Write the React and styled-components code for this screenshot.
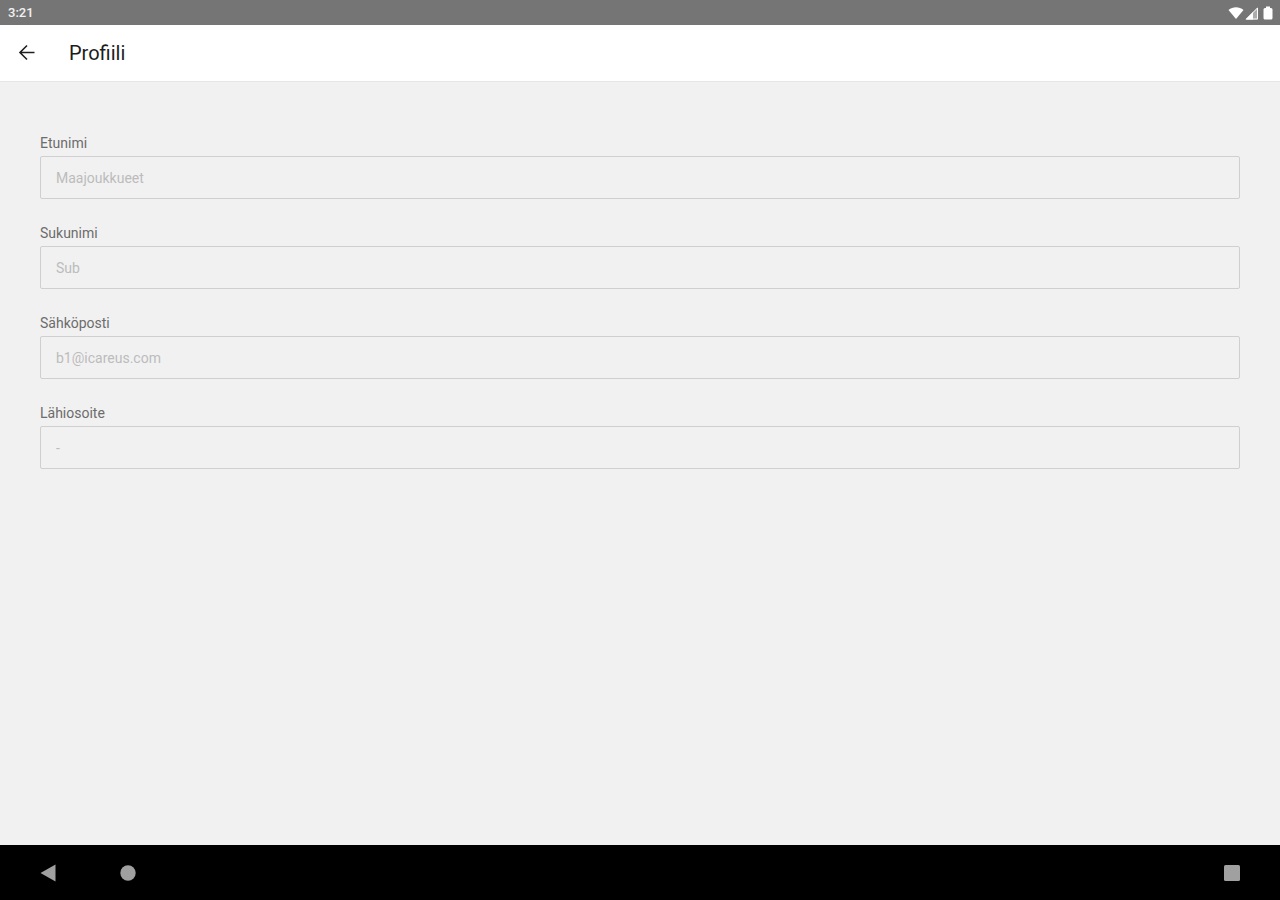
import React from "react";
import styled, { createGlobalStyle } from "styled-components";

const GlobalStyle = createGlobalStyle`
  *, *::before, *::after { box-sizing: border-box; }
  body {
    margin: 0;
    background: #f1f1f1;
    font-family: Roboto, "Liberation Sans", sans-serif;
  }
`;

const Screen = styled.div`
  display: flex;
  flex-direction: column;
  min-height: 100vh;
`;

const StatusBar = styled.div`
  display: flex;
  align-items: center;
  justify-content: space-between;
  height: 25px;
  padding: 0 6px 0 8px;
  background: #757575;
  color: #f1f1f1;
  font-size: 13px;
  font-weight: 500;
  line-height: 17px;
`;

const StatusIcons = styled.div`
  display: flex;
  align-items: center;
  gap: 1px;
`;

const Header = styled.header`
  display: flex;
  align-items: center;
  gap: 24px;
  height: 57px;
  padding: 0 9px;
  background: #fff;
  border-bottom: 1px solid #e6e6e6;
`;

const IconButton = styled.button`
  display: flex;
  align-items: center;
  justify-content: center;
  width: 36px;
  height: 36px;
  padding: 0;
  border: 0;
  background: none;
  color: ${({ $color }) => $color};
`;

const Title = styled.h1`
  margin: 0;
  color: #1c1c1c;
  font-size: 20px;
  font-weight: 400;
  line-height: 24px;
`;

const Form = styled.form`
  display: flex;
  flex: 1;
  flex-direction: column;
  gap: 26px;
  padding: 53px 40px;
`;

const Field = styled.div`
  display: flex;
  flex-direction: column;
  gap: 4px;
`;

const Label = styled.label`
  color: #6c6c6c;
  font-size: 14px;
  line-height: 17px;
`;

const Input = styled.input`
  width: 100%;
  height: 43px;
  padding: 0 15px;
  border: 1px solid #cfcfcf;
  border-radius: 2px;
  background: transparent;
  color: #bcbcbc;
  font-family: inherit;
  font-size: 14px;
  outline: none;
`;

const NavigationBar = styled.nav`
  display: flex;
  align-items: center;
  justify-content: space-between;
  height: 55px;
  padding: 0 30px;
  background: #000;
`;

const NavigationGroup = styled.div`
  display: flex;
  gap: 44px;
`;

const fields = [
  { id: "first-name", label: "Etunimi", value: "Maajoukkueet", type: "text" },
  { id: "last-name", label: "Sukunimi", value: "Sub", type: "text" },
  { id: "email", label: "Sähköposti", value: "b1@icareus.com", type: "email" },
  { id: "address", label: "Lähiosoite", value: "-", type: "text" },
];

export default function App() {
  return (
    <>
      <GlobalStyle />
      <Screen>
        <StatusBar>
          <span>3:21</span>
          <StatusIcons aria-hidden="true">
            <svg width="16" height="14" viewBox="0 0 16 14" fill="#fff">
              <path d="M0.5 4C4.8 0.2 11.2 0.2 15.5 4L8 13z" />
            </svg>
            <svg width="14" height="14" viewBox="0 0 14 14">
              <path d="M0.5 13.5L13 1v12.5z" fill="#fff" fillOpacity=".4" />
              <path d="M0.5 13.5L8 6v7.5z" fill="#fff" />
              <path d="M1.5 13L12.5 2v11z" fill="none" stroke="#fff" />
            </svg>
            <svg width="14" height="14" viewBox="0 0 14 14" fill="#fff">
              <path d="M6 0.5h4V2h1q1.5 0 1.5 1.5v8.5q0 1.5-1.5 1.500H5q-1.500 0-1.500-1.500v-8.500Q3.500 2 5 2h1z" />
            </svg>
          </StatusIcons>
        </StatusBar>
        <Header>
          <IconButton type="button" aria-label="Takaisin" $color="#202020">
            <svg width="18" height="18" viewBox="0 0 18 18" fill="none" stroke="currentColor" strokeWidth="1.6">
              <path d="M16.500 8.500H2.500M9 1.500L2 8.500l7 7" />
            </svg>
          </IconButton>
          <Title>Profiili</Title>
        </Header>
        <Form>
          {fields.map(({ id, label, value, type }) => (
            <Field key={id}>
              <Label htmlFor={id}>{label}</Label>
              <Input id={id} type={type} defaultValue={value} readOnly />
            </Field>
          ))}
        </Form>
        <NavigationBar>
          <NavigationGroup>
            <IconButton type="button" aria-label="Edellinen" $color="#a0a0a0">
              <svg width="16" height="18" viewBox="0 0 16 18" fill="currentColor">
                <path d="M15.500 0.500v17L0.500 9z" />
              </svg>
            </IconButton>
            <IconButton type="button" aria-label="Koti" $color="#a0a0a0">
              <svg width="16" height="16" viewBox="0 0 16 16" fill="currentColor">
                <circle cx="8" cy="8" r="7.700" />
              </svg>
            </IconButton>
          </NavigationGroup>
          <IconButton type="button" aria-label="Viimeisimmät" $color="#a0a0a0">
            <svg width="16" height="16" viewBox="0 0 16 16" fill="currentColor">
              <rect width="16" height="16" rx="1.500" />
            </svg>
          </IconButton>
        </NavigationBar>
      </Screen>
    </>
  );
}
